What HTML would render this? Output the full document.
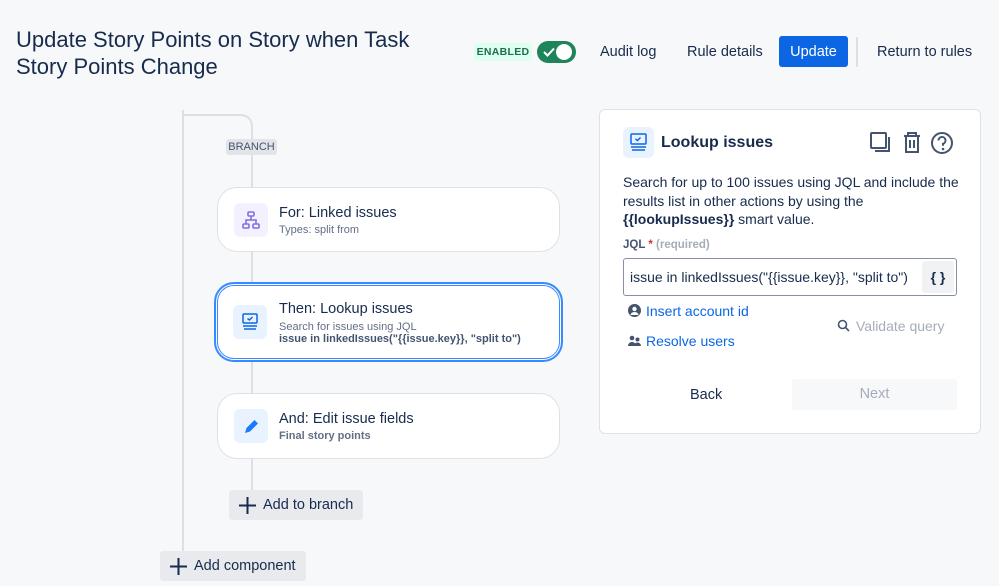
<!DOCTYPE html>
<html><head><style>
*{box-sizing:border-box;margin:0;padding:0}
body{width:999px;height:586px;background:#f7f8f9;font-family:"Liberation Sans",sans-serif;color:#172b4d;position:relative;overflow:hidden}
.abs{position:absolute}
.title{left:16px;top:26px;font-size:22px;font-weight:500;line-height:27px;color:#172b4d}
.nav{font-size:14.5px;font-weight:500;top:44px}
.card{position:absolute;background:#fff;border:1px solid #dfe1e6;border-radius:20px}
.ic{position:absolute;width:34px;height:34px;border-radius:6px;left:16px}
.ct{position:absolute;left:61px;font-size:14.5px}
.cs{position:absolute;left:61px;font-size:11px;color:#626f86}
.btn{position:absolute;background:#e9eaed;border-radius:3px;font-size:14.5px;font-weight:500;display:flex;align-items:center}
</style></head><body>
<div class="abs title">Update Story Points on Story when Task<br>Story Points Change</div>
<div class="abs" style="left:474px;top:43px;width:58px;height:18px;background:#dcfff1;border-radius:3px;color:#216e4e;font-size:10.5px;font-weight:700;text-align:center;line-height:18px;letter-spacing:.3px">ENABLED</div>
<div class="abs" style="left:537px;top:41px;width:39px;height:22px;background:#1f845a;border-radius:11px">
<svg class="abs" style="left:6px;top:6px" width="12" height="10"><path d="M1 5l3.5 3.5L11 1.5" stroke="#fff" stroke-width="2" fill="none"/></svg>
<div class="abs" style="left:19px;top:3px;width:16px;height:16px;border-radius:8px;background:#fff"></div></div>
<div class="abs nav" style="left:600px">Audit log</div>
<div class="abs nav" style="left:687px">Rule details</div>
<div class="abs" style="left:779px;top:36px;width:69px;height:31px;background:#0c66e4;border-radius:3px;color:#fff;font-size:14.5px;font-weight:500;text-align:center;line-height:32px">Update</div>
<div class="abs" style="left:856px;top:37px;width:2px;height:30px;background:#dcdfe4"></div>
<div class="abs nav" style="left:877px">Return to rules</div>

<div class="abs" style="left:182px;top:110px;width:2px;height:445px;background:#dcdfe4"></div>
<div class="abs" style="left:183px;top:114px;width:70px;height:30px;border-top:2px solid #dcdfe4;border-right:2px solid #dcdfe4;border-top-right-radius:12px"></div>
<div class="abs" style="left:251px;top:150px;width:2px;height:345px;background:#dcdfe4"></div>
<div class="abs" style="left:226px;top:139px;width:51px;height:16px;background:#e2e4e8;border-radius:3px;font-size:11px;color:#44546f;text-align:center;line-height:16px">BRANCH</div>

<div class="card" style="left:217px;top:187px;width:343px;height:65px">
<div class="ic" style="top:15px;background:#f3f0ff"><svg width="34" height="34"><g stroke="#8270db" stroke-width="1.6" fill="none"><rect x="14" y="9" width="6" height="4" rx="1"/><rect x="9" y="21" width="6" height="4" rx="1"/><rect x="19" y="21" width="6" height="4" rx="1"/><path d="M17 13v4M12 21v-4h10v4"/></g></svg></div>
<div class="ct" style="top:17px">For: Linked issues</div><div class="cs" style="top:36px">Types: split from</div></div>

<div class="card" style="left:214px;top:282px;width:349px;height:80px;border:2px solid #388bff;box-shadow:0 0 0 1px #fff inset,0 0 0 2px #388bff inset">
<div class="ic" style="top:21px;left:17px;background:#e9f2ff"><svg width="34" height="34"><g stroke="#0c66e4" stroke-width="1.5" fill="none"><rect x="10" y="9" width="14" height="9" rx="1"/><path d="M14.5 13.5l2 1.5 3-3"/><path d="M10 21h14M11 24h12"/></g></svg></div>
<div class="ct" style="top:17px;left:63px">Then: Lookup issues</div>
<div class="cs" style="top:37px;left:63px">Search for issues using JQL</div>
<div class="cs" style="top:49px;left:63px;font-weight:700;color:#44546f">issue in linkedIssues("{{issue.key}}, "split to")</div></div>

<div class="card" style="left:217px;top:393px;width:343px;height:66px">
<div class="ic" style="top:15px;background:#e9f2ff"><svg width="34" height="34"><path d="M11 24l1.5-5 8-8 3.5 3.5-8 8z" fill="#1d7afc"/></svg></div>
<div class="ct" style="top:17px">And: Edit issue fields</div><div class="cs" style="top:36px;font-weight:700">Final story points</div></div>

<div class="btn" style="left:229px;top:490px;width:134px;height:30px"><svg style="margin:0 7px 0 10px" width="17" height="17"><path d="M8.5 0v17M0 8.5h17" stroke="#172b4d" stroke-width="2"/></svg>Add to branch</div>
<div class="btn" style="left:160px;top:551px;width:146px;height:30px"><svg style="margin:0 7px 0 10px" width="17" height="17"><path d="M8.5 0v17M0 8.5h17" stroke="#172b4d" stroke-width="2"/></svg>Add component</div>

<div class="abs" style="left:599px;top:109px;width:382px;height:325px;background:#fff;border:1px solid #dfe1e6;border-radius:6px">
<div class="abs" style="left:23px;top:17px;width:31px;height:31px;border-radius:6px;background:#e9f2ff"><svg width="31" height="31"><g stroke="#0c66e4" stroke-width="1.5" fill="none"><rect x="8" y="7" width="15" height="10" rx="1"/><path d="M12.5 12l2 1.5 3-3"/><path d="M8 20h15M9 23h13"/></g></svg></div>
<div class="abs" style="left:61px;top:24px;font-size:16px;font-weight:700">Lookup issues</div>
<svg class="abs" style="left:268px;top:20px" width="90" height="26"><g stroke="#44546f" stroke-width="2" fill="none"><rect x="3" y="3" width="15" height="15" rx="1"/><path d="M21 7v14H7"/><path d="M36 6h16M40 6V3h8v3M38 6v16h12V6M42 10v8M46 10v8"/><circle cx="74" cy="13" r="10"/><path d="M70.5 10.5a3.5 3.5 0 1 1 4.5 3.3v2" /></g><circle cx="75" cy="19" r="1.3" fill="#44546f"/></svg>
<div class="abs" style="left:23px;top:63px;font-size:14px;line-height:18.5px;width:345px">Search for up to 100 issues using JQL and include the results list in other actions by using the <b>{{lookupIssues}}</b> smart value.</div>
<div class="abs" style="left:23px;top:129px;font-size:11.5px;font-weight:700;color:#44546f">JQL <span style="color:#c9372c">*</span> <span style="color:#a5adba">(required)</span></div>
<div class="abs" style="left:23px;top:148px;width:334px;height:38px;border:1px solid #8590a2;border-radius:3px">
<div class="abs" style="left:6px;top:10px;font-size:14px">issue in linkedIssues("{{issue.key}}, "split to")</div>
<div class="abs" style="right:2px;top:2px;width:32px;height:32px;background:#f1f2f4;border-radius:3px;text-align:center;line-height:32px;font-weight:700;font-size:14px">{ }</div></div>
<svg class="abs" style="left:28px;top:194px" width="13" height="13"><circle cx="6.5" cy="6.5" r="6.5" fill="#44546f"/><circle cx="6.5" cy="5" r="2.2" fill="#fff"/><path d="M2.5 11a4 3 0 0 1 8 0" fill="#fff"/></svg>
<div class="abs" style="left:46px;top:193px;font-size:14px;color:#0c66e4">Insert account id</div>
<svg class="abs" style="left:28px;top:225px" width="13" height="12"><circle cx="4" cy="3" r="2.3" fill="#44546f"/><circle cx="9.5" cy="4.5" r="2" fill="#44546f"/><path d="M0 11a4 4 0 0 1 8 0zM6 11a3.5 3.5 0 0 1 7 0z" fill="#44546f"/></svg>
<div class="abs" style="left:46px;top:223px;font-size:14px;color:#0c66e4">Resolve users</div>
<svg class="abs" style="left:237px;top:209px" width="13" height="13"><circle cx="5.5" cy="5.5" r="4" stroke="#44546f" stroke-width="1.6" fill="none"/><path d="M8.5 8.5l3.5 3.5" stroke="#44546f" stroke-width="1.6"/></svg>
<div class="abs" style="left:256px;top:208px;font-size:14px;color:#a5adba">Validate query</div>
<div class="abs" style="left:90px;top:277px;font-size:14.5px;font-weight:500">Back</div>
<div class="abs" style="left:192px;top:269px;width:165px;height:31px;background:#f7f8f9;border-radius:3px;text-align:center;line-height:31px;font-size:14.5px;font-weight:500;color:#a5adba">Next</div>
</div>
</body></html>
